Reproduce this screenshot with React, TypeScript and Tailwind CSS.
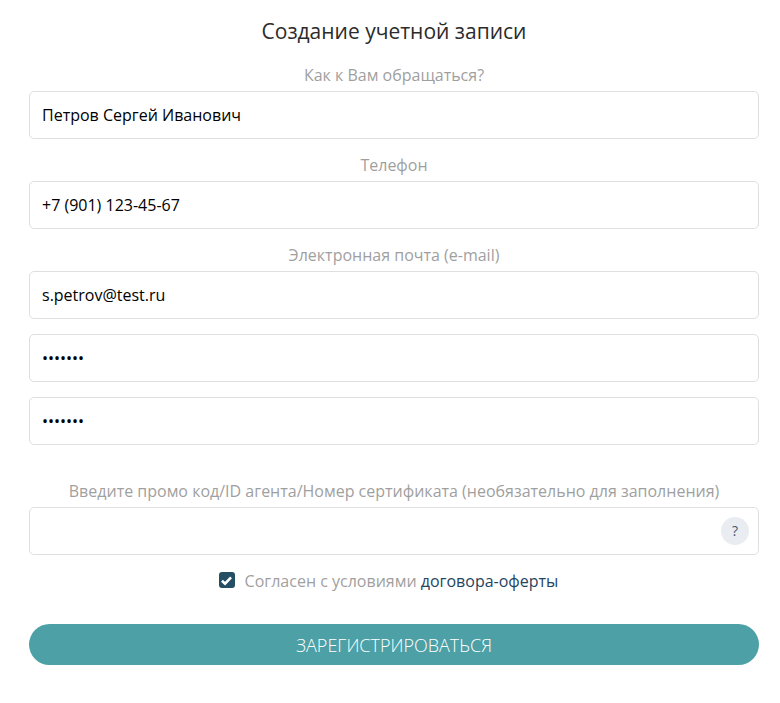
import React from 'react';

const font = "font-['Open_Sans',sans-serif]";

function Field({ label, value, type = 'text' }: { label?: string; value?: string; type?: string }) {
  return (
    <div className="flex flex-col">
      {label && <label className="h-[29px] pt-[1px] text-center text-base leading-[24px] text-[#9f9f9f]">{label}</label>}
      <input
        type={type}
        defaultValue={value}
        readOnly
        className="h-12 w-full rounded-[5px] border border-[#dfdfdf] bg-white px-3 text-base text-black outline-none"
      />
    </div>
  );
}

export default function App() {
  return (
    <div className={`${font} min-h-[703px] bg-white pl-[29px] pt-[16px] pr-[21px]`}>
      <h1 className="mb-[16px] h-[30px] text-center text-[21px] leading-[30px] text-[#2b2b2b]">Создание учетной записи</h1>

      <div className="flex flex-col gap-[13px]">
        <Field label="Как к Вам обращаться?" value="Петров Сергей Иванович" />
        <Field label="Телефон" value="+7 (901) 123-45-67" />
        <Field label="Электронная почта (e-mail)" value="s.petrov@test.ru" />
      </div>

      <div className="mt-[15px] flex flex-col gap-[15px]">
        <Field type="password" value="1234567" />
        <Field type="password" value="1234567" />
      </div>

      <div className="mt-[33px]">
        <label className="block h-[29px] pt-[1px] text-center text-base leading-[24px] text-[#9f9f9f]">
          Введите промо код/ID агента/Номер сертификата (необязательно для заполнения)
        </label>
        <div className="relative">
          <input
            type="text"
            readOnly
            className="h-12 w-full rounded-[5px] border border-[#dfdfdf] bg-white px-3 text-base text-black outline-none"
          />
          <span className="absolute right-[10px] top-[10px] flex h-7 w-7 items-center justify-center rounded-full bg-[#e9edf2] text-sm text-[#44586b]">
            ?
          </span>
        </div>
      </div>

      <div className="mt-[14px] mr-[11px] flex h-[24px] items-center justify-center gap-[10px] text-base">
        <span className="mb-[2px] flex h-4 w-4 items-center justify-center rounded-[3px] bg-[#234e63] text-white">
          <svg viewBox="0 0 12 12" className="h-[13px] w-[13px]" fill="none" stroke="currentColor" strokeWidth="2.4">
            <path d="M1.8 6.2 L4.7 9 L10.2 3.2" />
          </svg>
        </span>
        <span className="text-[#9f9f9f]">
          Согласен с условиями <a className="text-[#1f4560]">договора-оферты</a>
        </span>
      </div>

      <button className="mt-[31px] h-[41px] w-full rounded-[21px] bg-[#4ca0a6] text-lg font-light text-white">
        ЗАРЕГИСТРИРОВАТЬСЯ
      </button>
    </div>
  );
}
